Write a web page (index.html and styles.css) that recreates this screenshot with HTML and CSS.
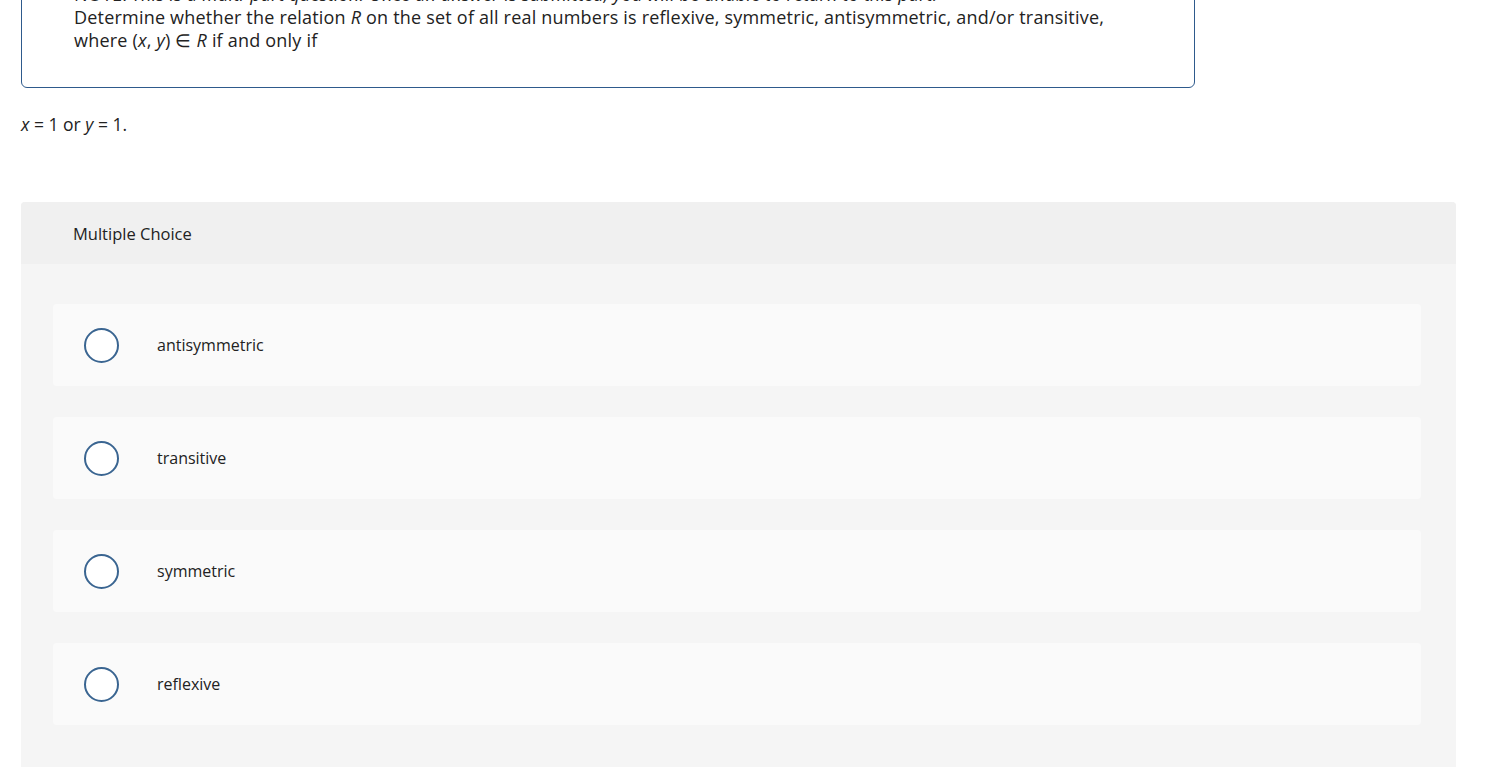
FILE: index.html
```html
<!DOCTYPE html>
<html lang="en">
<head>
<meta charset="utf-8">
<title>Multiple Choice</title>
<link rel="stylesheet" href="styles.css">
</head>
<body>
<main class="page">
  <section class="prompt">
    <p class="note">NOTE: <em>This is a multi-part question. Once an answer is submitted, you will be unable to return to this part.</em></p>
    <p class="question">Determine whether the relation <i>R</i> on the set of all real numbers is reflexive, symmetric, antisymmetric, and/or transitive, where (<i>x</i>, <i>y</i>) ∈ <i>R</i> if and only if</p>
  </section>
  <p class="condition"><i>x</i> = 1 or <i>y</i> = 1.</p>
  <section class="choices">
    <header class="choices-head">Multiple Choice</header>
    <div class="choices-body">
      <label class="option"><span class="radio"></span><span class="option-text">antisymmetric</span></label>
      <label class="option"><span class="radio"></span><span class="option-text">transitive</span></label>
      <label class="option"><span class="radio"></span><span class="option-text">symmetric</span></label>
      <label class="option"><span class="radio"></span><span class="option-text">reflexive</span></label>
    </div>
  </section>
</main>
</body>
</html>
```
FILE: styles.css
```css
html, body {
  margin: 0;
  padding: 0;
  background: #ffffff;
  overflow: hidden;
}
body {
  font-family: "Open Sans", "Lato", sans-serif;
  color: #222222;
}
.page {
  padding: 0 41px 0 21px;
  margin-top: -38px;
}
.prompt {
  width: 1174px;
  box-sizing: border-box;
  border: 1px solid #2e5a8c;
  border-radius: 6px;
  padding: 20px 52px 35px 52px;
  font-size: 18px;
  line-height: 23px;
  letter-spacing: 0.2px;
}
.prompt p {
  margin: 0;
}
.note em {
  font-style: italic;
}
.condition {
  margin: 24px 0 0 0;
  font-size: 17.5px;
  line-height: 24px;
}
.choices {
  margin-top: 66px;
  width: 1435px;
  background: #f5f5f5;
  border-radius: 4px 4px 0 0;
  min-height: 620px;
}
.choices-head {
  height: 62px;
  background: #f0f0f0;
  border-radius: 4px 4px 0 0;
  display: flex;
  align-items: center;
  padding-left: 52px;
  font-size: 16.5px;
}
.choices-body {
  padding: 40px 35px 40px 32px;
  display: flex;
  flex-direction: column;
  gap: 31px;
}
.option {
  height: 82px;
  background: #fafafa;
  border-radius: 4px;
  display: flex;
  align-items: center;
  padding-left: 31px;
}
.radio {
  width: 31px;
  height: 31px;
  border: 2px solid #3a6591;
  border-radius: 50%;
  background: #ffffff;
  flex: none;
}
.option-text {
  margin-left: 38px;
  font-size: 16px;
}
```
